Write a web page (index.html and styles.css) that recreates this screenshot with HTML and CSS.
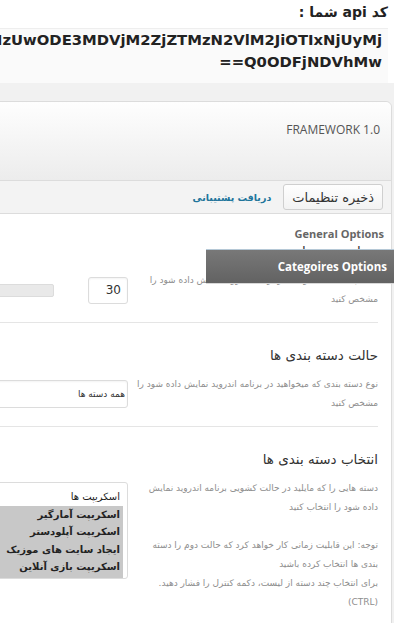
FILE: index.html
```html
<!DOCTYPE html>
<html lang="fa" dir="rtl">
<head>
    <meta charset="UTF-8">
    <meta name="viewport" content="width=device-width, initial-scale=1.0">
    <title>تنظیمات اپلیکیشن</title>
    <link rel="stylesheet" href="styles.css">
</head>
<body>
<div class="page">
    <div class="wrap">
        <div class="api">
            <h3 class="api-title">کد api شما :</h3>
            <p class="api-code">ZmE1YjM0NzUwODE3MDVjM2ZjZTMzN2VlM2JiOTIxNjUyMj<br>Q0ODFjNDVhMw==</p>
        </div>

        <div class="panel">
            <div class="panel-head">FRAMEWORK 1.0</div>
            <div class="toolbar">
                <button class="btn">ذخیره تنظیمات</button>
                <a href="#" class="support">دریافت پشتیبانی</a>
            </div>

            <div class="panel-body">
                <ul class="tabs">
                    <li class="tab">General Options</li>
                    <li class="tab active">Categoires Options</li>
                </ul>

                <div class="option">
                    <h4 class="option-title">تعداد پست ها</h4>
                    <div class="option-row">
                        <p class="desc">تعداد پستی که میخواهید در برنامه اندروید نمایش داده شود را<br>مشخص کنید</p>
                        <div class="control">
                            <input class="field small" type="text" value="30">
                            <div class="slider"></div>
                        </div>
                    </div>
                </div>

                <div class="option">
                    <h4 class="option-title">حالت دسته بندی ها</h4>
                    <div class="option-row">
                        <p class="desc">نوع دسته بندی که میخواهید در برنامه اندروید نمایش داده شود را<br>مشخص کنید</p>
                        <div class="control">
                            <select class="field select">
                                <option>همه دسته ها</option>
                            </select>
                        </div>
                    </div>
                </div>

                <div class="option">
                    <h4 class="option-title">انتخاب دسته بندی ها</h4>
                    <div class="option-row">
                        <p class="desc">دسته هایی را که مایلید در حالت کشویی برنامه اندروید نمایش<br>داده شود را انتخاب کنید<br><br>توجه: این قابلیت زمانی کار خواهد کرد که حالت دوم را دسته<br>بندی ها انتخاب کرده باشید<br>برای انتخاب چند دسته از لیست، دکمه کنترل را فشار دهید.<br>(CTRL)</p>
                        <div class="control list">
                            <div class="listbox">
                                <div class="opt">اسکریپت ها</div>
                                <div class="opt selected">اسکریپت آمارگیر</div>
                                <div class="opt selected">اسکریپت آپلودستر</div>
                                <div class="opt selected">ایجاد سایت های موزیک</div>
                                <div class="opt selected">اسکریپت بازی آنلاین</div>
                                <div class="opt selected">اسکریپت حراج آنلاین</div>
                            </div>
                        </div>
                    </div>
                </div>
            </div>
        </div>
    </div>
</div>
</body>
</html>
```

FILE: styles.css
```css
body {
    margin: 0;
    background-color: #f1f1f1;
    font-family: "DejaVu Sans", sans-serif;
    color: #333;
}

.page {
    height: 623px;
    overflow: hidden;
}

.wrap {
    width: 700px;
}

/* api key */
.api {
    background-color: #fff;
    padding-right: 6px;
}
.api-title {
    margin: 0;
    font-size: 14px;
    line-height: 24px;
    font-weight: bold;
    color: #222;
}
.api-code {
    margin: 4px 0 0;
    padding: 0 6px 10px 0;
    background-color: #fafafa;
    border-top: 1px solid #eee;
    font-size: 14.8px;
    line-height: 22px;
    font-weight: bold;
    color: #222;
    white-space: nowrap;
}

/* panel */
.panel {
    margin: 18px 2px 0 0;
    background-color: #fff;
    border: 1px solid #dcdcdc;
    border-top-right-radius: 6px;
}
.panel-head {
    height: 79px;
    box-sizing: border-box;
    padding: 19px 11px 0 0;
    background: linear-gradient(#fefefe, #ececec);
    border-bottom: 1px solid #dcdcdc;
    border-top-right-radius: 6px;
    font-family: "Open Sans", sans-serif;
    font-size: 12px;
    line-height: 18px;
    color: #555;
}
.toolbar {
    display: flex;
    align-items: center;
    gap: 12px;
    height: 32px;
    padding: 0 8px;
    background-color: #f3f3f3;
    border-bottom: 1px solid #dcdcdc;
}
.btn {
    height: 26px;
    padding: 0 8px;
    background: linear-gradient(#fefefe, #f2f2f2);
    border: 1px solid #cfcfcf;
    border-radius: 3px;
    font-family: "DejaVu Sans", sans-serif;
    font-size: 13px;
    color: #333;
}
.support {
    font-size: 9.5px;
    font-weight: bold;
    color: #21759b;
    text-decoration: none;
}

.panel-body {
    position: relative;
    padding-top: 5px;
}

/* side tabs, they sit over the first option */
.tabs {
    position: absolute;
    top: 10px;
    right: -3px;
    width: 188px;
    margin: 0;
    padding: 0;
    list-style: none;
    font-family: "Open Sans", sans-serif;
    font-weight: bold;
}
.tab {
    height: 20px;
    padding-right: 10px;
    font-size: 11px;
    line-height: 20px;
    color: #666;
}
.tab.active {
    height: 35px;
    box-sizing: border-box;
    margin-top: 5px;
    padding-right: 7px;
    background: linear-gradient(#787878, #626262);
    border-top: 1px solid #b5c8d6;
    border-bottom: 1px solid #d8d8d8;
    font-size: 11.5px;
    line-height: 33px;
    color: #fff;
}

/* options */
.option {
    margin-right: 13px;
    padding: 20px 0 13px;
    border-bottom: 1px solid #e5e5e5;
}
.option-title {
    margin: 0 0 8px;
    font-size: 13.5px;
    line-height: 24px;
    font-weight: normal;
    color: #333;
}
.option-row {
    display: flex;
    gap: 10px;
}
.desc {
    width: 240px;
    flex: none;
    margin: 0;
    font-size: 9px;
    line-height: 19px;
    color: #8e8e8e;
    white-space: nowrap;
}
.control {
    flex: 1;
    display: flex;
    align-items: center;
    gap: 34px;
}

.field {
    box-sizing: border-box;
    height: 27px;
    background-color: #fff;
    border: 1px solid #dcdcdc;
    border-radius: 3px;
    box-shadow: inset 0 1px 2px rgba(0, 0, 0, 0.05);
    font-family: "DejaVu Sans", sans-serif;
    color: #333;
}
.field.small {
    width: 40px;
    padding: 0 6px 0 0;
    font-size: 12px;
    text-align: right;
}
.select {
    width: 300px;
    height: 28px;
    padding: 0 2px 0 0;
    appearance: none;
    font-size: 9px;
}
.slider {
    width: 200px;
    height: 11px;
    background-color: #e9e9e9;
    border: 1px solid #dcdcdc;
    border-radius: 2px;
}

.control.list {
    align-items: flex-start;
    padding-top: 3px;
}
.listbox {
    width: 300px;
    height: 97px;
    box-sizing: border-box;
    padding: 5px 4px 0 0;
    overflow: hidden;
    border: 1px solid #dcdcdc;
    border-radius: 3px;
    font-size: 10px;
    line-height: 17.5px;
    color: #222;
}
.opt {
    padding-right: 3px;
}
.opt.selected {
    background-color: #c8c8c8;
    font-weight: bold;
}
```
